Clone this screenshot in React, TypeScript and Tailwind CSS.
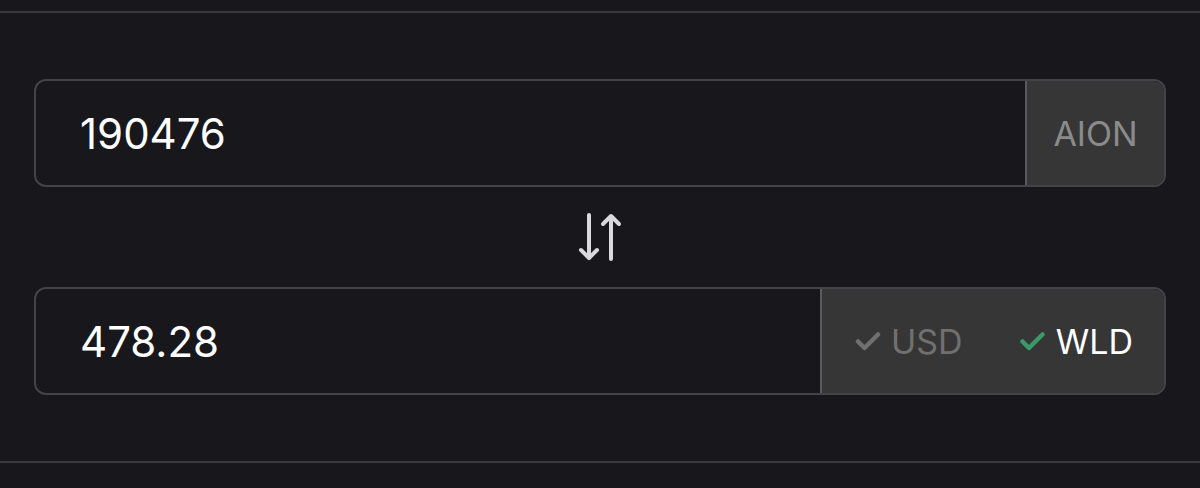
import React from "react";

function Check({ className }: { className?: string }) {
  return (
    <svg viewBox="0 0 26 20" className={className} fill="none" stroke="currentColor" strokeWidth={4.5} strokeLinecap="round" strokeLinejoin="round">
      <path d="M3 10.5l6.5 6.5L23 3.5" />
    </svg>
  );
}

function SwapIcon() {
  return (
    <svg width="44" height="48" viewBox="0 0 44 48" fill="none" stroke="#d9d9dd" strokeWidth={4} strokeLinecap="round" strokeLinejoin="round">
      <path d="M11 2v42" />
      <path d="M3 37l8 8 8-8" />
      <path d="M33 46V4" />
      <path d="M25 11l8-8 8 8" />
    </svg>
  );
}

export default function App() {
  return (
    <div
      className="h-[488px] w-[1200px] bg-[#18171c] pt-[11px]"
      style={{ fontFamily: "Inter, 'Noto Sans', sans-serif" }}
    >
      <div className="h-[2px] bg-[#3a393e]" />
      <div className="flex flex-col px-[34px] pt-[66px]">
        <div className="flex h-[108px] overflow-hidden rounded-[12px] border-2 border-[#444349]">
          <div className="flex flex-1 items-center pl-[44px] text-[42px] text-white">190476</div>
          <div className="flex w-[139px] items-center justify-center border-l-2 border-[#5a595e] bg-[#363636] text-[34px] text-[#8b8b8b]">
            AION
          </div>
        </div>
        <div className="flex h-[100px] items-center justify-center">
          <SwapIcon />
        </div>
        <div className="flex h-[108px] overflow-hidden rounded-[12px] border-2 border-[#444349]">
          <div className="flex flex-1 items-center pl-[44px] text-[42px] text-white">478.28</div>
          <div className="flex w-[344px] items-center gap-[56px] border-l-2 border-[#5a595e] bg-[#363636] pl-[33px] text-[34px]">
            <span className="flex items-center gap-[10px] text-[#707070]">
              <Check className="h-[20px] w-[26px]" />
              USD
            </span>
            <span className="flex items-center gap-[10px] text-white">
              <Check className="h-[20px] w-[27px] text-[#3c9a68]" />
              WLD
            </span>
          </div>
        </div>
      </div>
      <div className="mt-[66px] h-[2px] bg-[#3a393e]" />
    </div>
  );
}
